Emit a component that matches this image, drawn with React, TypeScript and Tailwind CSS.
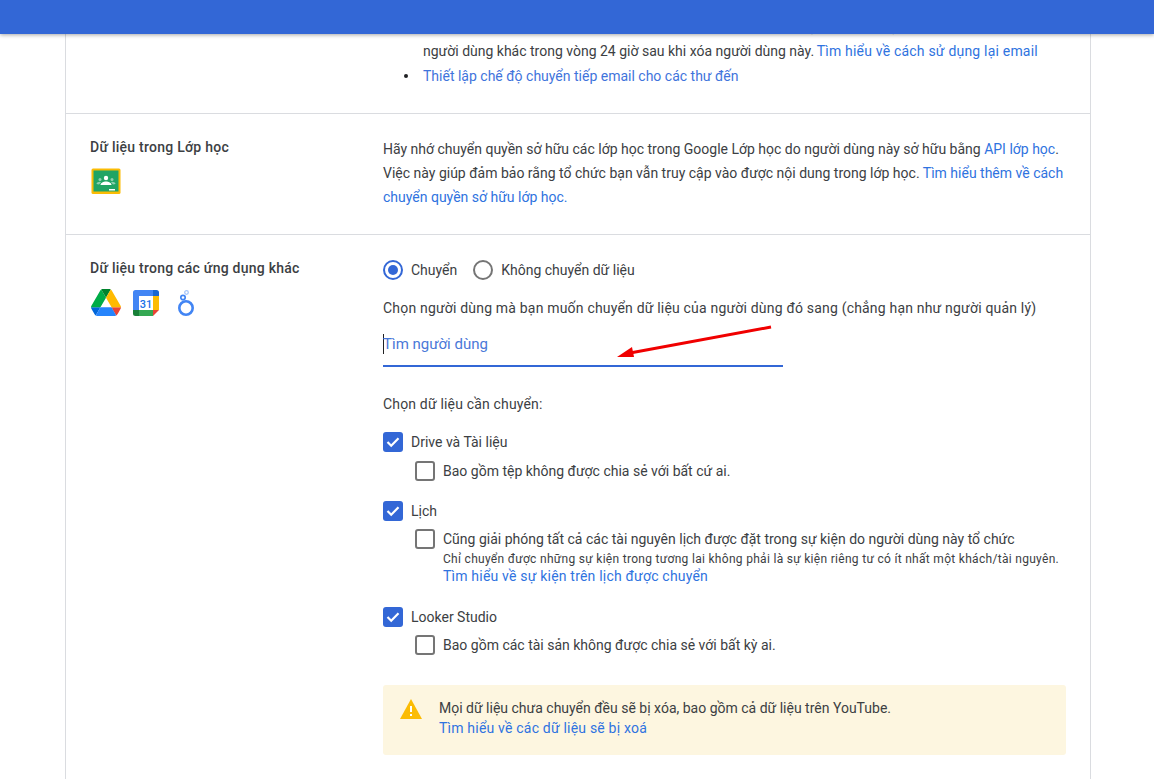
import React from "react";

const linkCls = "text-[#2f73e0]";

const ClassroomIcon = () => (
  <svg width="30" height="26" viewBox="0 0 30 26">
    <rect x="0.5" y="0.5" width="29" height="25.5" rx="1.5" fill="#fbbc04" />
    <rect x="2.5" y="2.5" width="25" height="21" fill="#21a464" />
    <circle cx="15" cy="10" r="2.2" fill="#fff" />
    <path d="M9.5 17c0-2.4 3-3.6 5.500-3.600s5.500 1.200 5.500 3.600z" fill="#fff" />
    <circle cx="9" cy="11.500" r="1.500" fill="#8fd0b0" />
    <circle cx="21" cy="11.500" r="1.500" fill="#8fd0b0" />
    <path d="M5.500 16c0-1.500 2-2.300 3.500-2.300l1 .6-2 2.200z" fill="#8fd0b0" />
    <path d="M24.500 16c0-1.500-2-2.300-3.500-2.300l-1 .6 2 2.200z" fill="#8fd0b0" />
    <rect x="18" y="21" width="6" height="1.500" fill="#fff" />
  </svg>
);

const DriveIcon = () => (
  <svg width="30" height="27" viewBox="0 0 87.3 78">
    <path d="m6.600 66.850 3.850 6.650c.8 1.400 1.950 2.500 3.300 3.300l13.750-23.800h-27.500c0 1.550.4 3.100 1.200 4.500z" fill="#0066da" />
    <path d="m43.650 25-13.750-23.800c-1.350.8-2.500 1.900-3.300 3.300l-25.400 44a9.060 9.060 0 0 0 -1.200 4.500h27.500z" fill="#00ac47" />
    <path d="m73.550 76.800c1.350-.8 2.500-1.900 3.300-3.300l1.600-2.750 7.650-13.250c.8-1.400 1.200-2.950 1.200-4.500h-27.502l5.852 11.500z" fill="#ea4335" />
    <path d="m43.650 25 13.750-23.800c-1.350-.8-2.900-1.200-4.500-1.200h-18.500c-1.600 0-3.150.45-4.500 1.200z" fill="#00832d" />
    <path d="m59.800 53h-32.300l-13.750 23.800c1.350.8 2.900 1.200 4.500 1.200h50.800c1.600 0 3.150-.45 4.500-1.200z" fill="#2684fc" />
    <path d="m73.400 26.500-12.700-22c-.8-1.400-1.950-2.500-3.300-3.300l-13.750 23.800 16.150 28h27.450c0-1.550-.4-3.100-1.200-4.500z" fill="#ffba00" />
  </svg>
);

const CalendarIcon = () => (
  <svg width="26" height="26" viewBox="0 0 26 26">
    <path d="M20 0H2.500A2.500 2.500 0 0 0 0 2.500V6h20z" fill="#4285f4" />
    <path d="M20 0v6h6V2.500A2.500 2.500 0 0 0 23.500 0z" fill="#1967d2" />
    <rect x="0" y="6" width="6" height="14" fill="#4285f4" />
    <rect x="20" y="6" width="6" height="14" fill="#fbbc04" />
    <rect x="6" y="20" width="14" height="6" fill="#34a853" />
    <path d="M0 20v3.500A2.500 2.500 0 0 0 2.500 26H6v-6z" fill="#188038" />
    <path d="M20 20h6l-6 6z" fill="#ea4335" />
    <rect x="6" y="6" width="14" height="14" fill="#fff" />
    <text x="13" y="17.500" textAnchor="middle" fontSize="11" fontWeight="500" fill="#1a73e8" fontFamily="Roboto, sans-serif">31</text>
  </svg>
);

const LookerIcon = () => (
  <svg width="18" height="26" viewBox="0 0 18 26">
    <circle cx="8" cy="18" r="6.700" fill="none" stroke="#4285f4" strokeWidth="2.600" />
    <circle cx="5" cy="7.500" r="2.200" fill="none" stroke="#4285f4" strokeWidth="1.700" />
    <circle cx="8.500" cy="2.500" r="1.800" fill="none" stroke="#a6c5fa" strokeWidth="1.300" />
  </svg>
);

const Check = ({ on }: { on?: boolean }) =>
  on ? (
    <span className="flex h-5 w-5 shrink-0 items-center justify-center rounded-[3px] bg-[#3367d6]">
      <svg width="16" height="16" viewBox="0 0 16 16">
        <path d="M2.500 8l3.700 3.700L13.500 4.300" fill="none" stroke="#fff" strokeWidth="2.200" />
      </svg>
    </span>
  ) : (
    <span className="h-5 w-5 shrink-0 rounded-[3px] border-2 border-[#757575] bg-white" />
  );

const Radio = ({ on }: { on?: boolean }) => (
  <span
    className={`flex h-5 w-5 items-center justify-center rounded-full border-2 ${on ? "border-[#3367d6]" : "border-[#757575]"}`}
  >
    {on && <span className="h-2.5 w-2.5 rounded-full bg-[#3367d6]" />}
  </span>
);

const CheckRow = ({ on, label, className }: { on?: boolean; label: string; className?: string }) => (
  <div className={`flex h-5 items-center gap-2 ${className ?? ""}`}>
    <Check on={on} />
    <span>{label}</span>
  </div>
);

export default function App() {
  return (
    <div className="relative h-[779px] overflow-hidden bg-white font-['Roboto',sans-serif] text-sm text-[#3c4043]">
      <header className="relative z-10 h-[34px] bg-[#3367d6] shadow-[0_1px_4px_rgba(0,0,0,0.35)]" />

      <main className="mx-[65px] h-[790px] w-[1026px] border-x border-[#dadce0]">
        {/* section cut off by the header */}
        <section className="-mt-[18px] h-[98px] border-b border-[#dadce0] pl-[357px] pr-6">
          <ul className="leading-[25px]">
            <li className="mb-[2px] whitespace-nowrap leading-[20.5px]">
              Nếu muốn sử dụng lại địa chỉ email chính của người dùng này (hoặc bí danh), hãy gán cho
            </li>
            <li className="whitespace-nowrap">
              người dùng khác trong vòng 24 giờ sau khi xóa người dùng này.{" "}
              <span className={`-ml-px tracking-[0.2px] ${linkCls}`}>Tìm hiểu về cách sử dụng lại email</span>
            </li>
            <li className="-ml-[19px] flex items-center">
              <span className="mr-[15px] h-1 w-1 rounded-full bg-[#202124]" />
              <span className="text-[#3f74dc]">Thiết lập chế độ chuyển tiếp email cho các thư đến</span>
            </li>
          </ul>
        </section>

        <section className="flex h-[121px] border-b border-[#dadce0] pl-6 pr-6 pt-[23px]">
          <div className="w-[293px] shrink-0">
            <h3 className="font-medium leading-5 tracking-[0.25px]">Dữ liệu trong Lớp học</h3>
            <div className="mt-[11px] ml-px">
              <ClassroomIcon />
            </div>
          </div>
          <p className="leading-6">
            Hãy nhớ chuyển quyền sở hữu các lớp học trong Google Lớp học do người dùng này sở hữu bằng{" "}
            <span className={linkCls}>API lớp học</span>.
            <br />
            Việc này giúp đảm bảo rằng tổ chức bạn vẫn truy cập vào được nội dung trong lớp học.{" "}
            <span className={linkCls}>Tìm hiểu thêm về cách</span>
            <br />
            <span className={linkCls}>chuyển quyền sở hữu lớp học.</span>
          </p>
        </section>

        <section className="flex pl-6 pr-6 pt-[25px]">
          <div className="w-[293px] shrink-0">
            <h3 className="mt-[-2px] font-medium leading-5 tracking-[0.25px]">Dữ liệu trong các ứng dụng khác</h3>
            <div className="ml-px mt-[11px] flex items-center">
              <DriveIcon />
              <span className="ml-[12px]">
                <CalendarIcon />
              </span>
              <span className="ml-[19px]">
                <LookerIcon />
              </span>
            </div>
          </div>

          <div className="relative w-[683px]">
            <div className="flex h-5 items-center">
              <Radio on />
              <span className="ml-2">Chuyển</span>
              <span className="ml-4">
                <Radio />
              </span>
              <span className="ml-2">Không chuyển dữ liệu</span>
            </div>
            <p className="mt-[18px] leading-5 tracking-[0.19px]">
              Chọn người dùng mà bạn muốn chuyển dữ liệu của người dùng đó sang (chẳng hạn như người quản lý)
            </p>
            <div className="mt-[14px] flex h-[35px] w-[400px] items-start border-b-2 border-[#3367d6] pt-0.5">
              <span className="-mr-px h-5 w-px bg-[#202124]" />
              <span className="text-[15px] leading-5 text-[#4a78d8]">Tìm người dùng</span>
            </div>
            <p className="mt-[27px] leading-5 tracking-[0.17px]">Chọn dữ liệu cần chuyển:</p>

            <CheckRow on label="Drive và Tài liệu" className="mt-[18px]" />
            <CheckRow label="Bao gồm tệp không được chia sẻ với bất cứ ai." className="ml-8 mt-[9px]" />

            <CheckRow on label="Lịch" className="mt-[20px]" />
            <CheckRow
              label="Cũng giải phóng tất cả các tài nguyên lịch được đặt trong sự kiện do người dùng này tổ chức"
              className="ml-8 mt-[8px]"
            />
            <p className="ml-[60px] mt-px whitespace-nowrap text-xs leading-[18px] tracking-[0.3px]">
              Chỉ chuyển được những sự kiện trong tương lai không phải là sự kiện riêng tư có ít nhất một khách/tài nguyên.
            </p>
            <p className={`ml-[60px] -mt-px leading-[18px] tracking-[0.2px] ${linkCls}`}>
              Tìm hiểu về sự kiện trên lịch được chuyển
            </p>

            <CheckRow on label="Looker Studio" className="mt-[22px]" />
            <CheckRow label="Bao gồm các tài sản không được chia sẻ với bất kỳ ai." className="ml-8 mt-[8px]" />

            <div className="mt-[30px] flex h-[70px] rounded-[3px] bg-[#fdf6e0] pl-[17px] pt-[13px]">
              <svg width="22" height="20" viewBox="0 0 22 20" className="mt-px shrink-0">
                <path d="M11 0l11 20H0z" fill="#fbbc04" />
                <rect x="10" y="7" width="2" height="6" fill="#fff" />
                <rect x="10" y="15" width="2" height="2" fill="#fff" />
              </svg>
              <div className="ml-[17px] leading-5">
                <p>Mọi dữ liệu chưa chuyển đều sẽ bị xóa, bao gồm cả dữ liệu trên YouTube.</p>
                <p className={`tracking-[0.2px] ${linkCls}`}>Tìm hiểu về các dữ liệu sẽ bị xoá</p>
              </div>
            </div>

            {/* red annotation arrow */}
            <svg width="170" height="40" viewBox="0 0 170 40" className="absolute left-[225px] top-[64px]">
              <path d="M163 3L22 29" stroke="#f00000" strokeWidth="3" fill="none" />
              <path d="M9 33l15-10 2 10z" fill="#f00000" />
            </svg>
          </div>
        </section>
      </main>
    </div>
  );
}
